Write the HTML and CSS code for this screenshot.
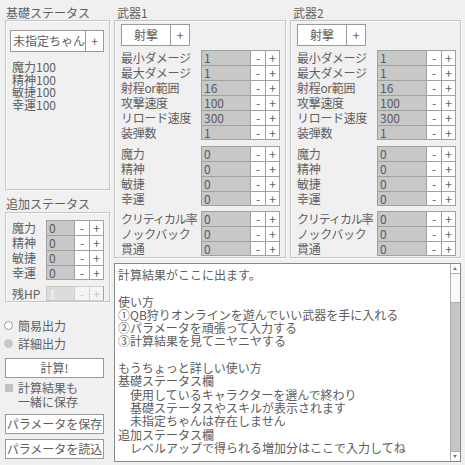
FILE: index.html
```html
<!DOCTYPE html>
<html lang="ja">
<head>
<meta charset="utf-8">
<link rel="stylesheet" href="styles.css">
</head>
<body>
<div class="app">
  <div class="left">
    <div class="title">基礎ステータス</div>
    <div class="box base">
      <div class="pick char"><span class="pick-main">未指定ちゃん</span><span class="pick-plus">+</span></div>
      <div class="stats">魔力100<br>精神100<br>敏捷100<br>幸運100</div>
    </div>
    <div class="title t2">追加ステータス</div>
    <div class="box extra">
      <div class="rows">
        <div class="row"><span class="lbl">魔力</span><span class="inp">0</span><span class="btn">-</span><span class="btn">+</span></div>
        <div class="row"><span class="lbl">精神</span><span class="inp">0</span><span class="btn">-</span><span class="btn">+</span></div>
        <div class="row"><span class="lbl">敏捷</span><span class="inp">0</span><span class="btn">-</span><span class="btn">+</span></div>
        <div class="row"><span class="lbl">幸運</span><span class="inp">0</span><span class="btn">-</span><span class="btn">+</span></div>
      </div>
      <div class="row hp disabled"><span class="lbl">残HP</span><span class="inp">1</span><span class="btn">-</span><span class="btn">+</span></div>
    </div>
    <div class="radio"><span class="dot"></span>簡易出力</div>
    <div class="radio"><span class="dot on"></span>詳細出力</div>
    <div class="button calc">計算!</div>
    <div class="check"><span class="cb"></span><span>計算結果も<br>一緒に保存</span></div>
    <div class="button">パラメータを保存</div>
    <div class="button">パラメータを読込</div>
  </div>

  <div class="weapon">
    <div class="title">武器1</div>
    <div class="box wbox">
      <div class="pick shot"><span class="pick-main">射撃</span><span class="pick-plus">+</span></div>
      <div class="rows">
        <div class="row"><span class="lbl">最小ダメージ</span><span class="inp">1</span><span class="btn">-</span><span class="btn">+</span></div>
        <div class="row"><span class="lbl">最大ダメージ</span><span class="inp">1</span><span class="btn">-</span><span class="btn">+</span></div>
        <div class="row"><span class="lbl">射程or範囲</span><span class="inp">16</span><span class="btn">-</span><span class="btn">+</span></div>
        <div class="row"><span class="lbl">攻撃速度</span><span class="inp">100</span><span class="btn">-</span><span class="btn">+</span></div>
        <div class="row"><span class="lbl">リロード速度</span><span class="inp">300</span><span class="btn">-</span><span class="btn">+</span></div>
        <div class="row"><span class="lbl">装弾数</span><span class="inp">1</span><span class="btn">-</span><span class="btn">+</span></div>
      </div>
      <div class="rows g2">
        <div class="row"><span class="lbl">魔力</span><span class="inp">0</span><span class="btn">-</span><span class="btn">+</span></div>
        <div class="row"><span class="lbl">精神</span><span class="inp">0</span><span class="btn">-</span><span class="btn">+</span></div>
        <div class="row"><span class="lbl">敏捷</span><span class="inp">0</span><span class="btn">-</span><span class="btn">+</span></div>
        <div class="row"><span class="lbl">幸運</span><span class="inp">0</span><span class="btn">-</span><span class="btn">+</span></div>
      </div>
      <div class="rows g3">
        <div class="row"><span class="lbl narrow">クリティカル率</span><span class="inp">0</span><span class="btn">-</span><span class="btn">+</span></div>
        <div class="row"><span class="lbl">ノックバック</span><span class="inp">0</span><span class="btn">-</span><span class="btn">+</span></div>
        <div class="row"><span class="lbl">貫通</span><span class="inp">0</span><span class="btn">-</span><span class="btn">+</span></div>
      </div>
    </div>
  </div>

  <div class="weapon w2">
    <div class="title">武器2</div>
    <div class="box wbox">
      <div class="pick shot"><span class="pick-main">射撃</span><span class="pick-plus">+</span></div>
      <div class="rows">
        <div class="row"><span class="lbl">最小ダメージ</span><span class="inp">1</span><span class="btn">-</span><span class="btn">+</span></div>
        <div class="row"><span class="lbl">最大ダメージ</span><span class="inp">1</span><span class="btn">-</span><span class="btn">+</span></div>
        <div class="row"><span class="lbl">射程or範囲</span><span class="inp">16</span><span class="btn">-</span><span class="btn">+</span></div>
        <div class="row"><span class="lbl">攻撃速度</span><span class="inp">100</span><span class="btn">-</span><span class="btn">+</span></div>
        <div class="row"><span class="lbl">リロード速度</span><span class="inp">300</span><span class="btn">-</span><span class="btn">+</span></div>
        <div class="row"><span class="lbl">装弾数</span><span class="inp">1</span><span class="btn">-</span><span class="btn">+</span></div>
      </div>
      <div class="rows g2">
        <div class="row"><span class="lbl">魔力</span><span class="inp">0</span><span class="btn">-</span><span class="btn">+</span></div>
        <div class="row"><span class="lbl">精神</span><span class="inp">0</span><span class="btn">-</span><span class="btn">+</span></div>
        <div class="row"><span class="lbl">敏捷</span><span class="inp">0</span><span class="btn">-</span><span class="btn">+</span></div>
        <div class="row"><span class="lbl">幸運</span><span class="inp">0</span><span class="btn">-</span><span class="btn">+</span></div>
      </div>
      <div class="rows g3">
        <div class="row"><span class="lbl narrow">クリティカル率</span><span class="inp">0</span><span class="btn">-</span><span class="btn">+</span></div>
        <div class="row"><span class="lbl">ノックバック</span><span class="inp">0</span><span class="btn">-</span><span class="btn">+</span></div>
        <div class="row"><span class="lbl">貫通</span><span class="inp">0</span><span class="btn">-</span><span class="btn">+</span></div>
      </div>
    </div>
  </div>

  <div class="output">
    <div class="text">計算結果がここに出ます。

使い方
①QB狩りオンラインを遊んでいい武器を手に入れる
②パラメータを頑張って入力する
③計算結果を見てニヤニヤする

もうちょっと詳しい使い方
基礎ステータス欄
　使用しているキャラクターを選んで終わり
　基礎ステータスやスキルが表示されます
　未指定ちゃんは存在しません
追加ステータス欄
　レベルアップで得られる増加分はここで入力してね</div>
    <div class="scroll">
      <span class="arrow up"></span>
      <span class="thumb"></span>
      <span class="track"></span>
      <span class="arrow down"></span>
    </div>
  </div>
</div>
</body>
</html>
```

FILE: styles.css
```css
html, body {
  margin: 0;
  padding: 0;
}
body {
  background: #f0f0f0;
  color: #606060;
  font-family: "Noto Sans CJK JP", "Noto Sans", sans-serif;
  font-size: 12px;
  line-height: 15px;
  width: 465px;
  height: 465px;
  overflow: hidden;
}
.app {
  display: grid;
  grid-template-columns: 113px 176px 176px;
  grid-template-rows: 260px 205px;
}
.left {
  grid-row: 1 / 3;
  display: flex;
  flex-direction: column;
}
.title {
  height: 20px;
  padding-left: 6px;
  line-height: 15px;
  padding-top: 5px;
  box-sizing: border-box;
}
.title.t2 {
  height: 22px;
  padding-top: 6px;
}
.box {
  border: 1px solid #c4c4c4;
  box-shadow: inset 1px 1px 0 #fafafa, 1px 1px 0 #fafafa;
  box-sizing: border-box;
}
.base {
  margin-left: 5px;
  width: 105px;
  height: 170px;
  padding: 9px 0 0 4px;
}
.pick {
  display: flex;
  height: 22px;
  background: #fff;
  border: 1px solid #9a9a9a;
  box-sizing: border-box;
  line-height: 20px;
}
.pick-main {
  flex: 1;
  text-align: center;
  border-right: 1px solid #9a9a9a;
}
.pick-plus {
  width: 17px;
  text-align: center;
}
.char {
  width: 94px;
}
.char .pick-main {
  padding-left: 2px;
  text-align: left;
}
.stats {
  margin-top: 9px;
  padding-left: 2px;
  line-height: 12.7px;
}
.rows {
  display: flex;
  flex-direction: column;
}
.row {
  display: flex;
  height: 15px;
  line-height: 15px;
}
.lbl {
  flex: none;
}
.inp {
  background: #c8c8c8;
  border: 1px solid #a0a0a0;
  border-right: none;
  border-bottom: none;
  padding-left: 2px;
  box-sizing: border-box;
  line-height: 14px;
  color: #5a5a5a;
}
.btn {
  width: 15px;
  background: #fff;
  border: 1px solid #a0a0a0;
  border-right: none;
  border-bottom: none;
  box-sizing: border-box;
  text-align: center;
  line-height: 14px;
}
.row .btn:last-child {
  border-right: 1px solid #a0a0a0;
}
.rows .row:last-child .inp,
.rows .row:last-child .btn,
.hp .inp,
.hp .btn {
  border-bottom: 1px solid #a0a0a0;
  height: 15px;
}
.extra {
  margin-left: 5px;
  width: 105px;
  height: 90px;
  padding: 7px 0 0 6px;
}
.extra .lbl {
  width: 34px;
}
.extra .inp {
  width: 28px;
}
.hp {
  margin-top: 6px;
}
.disabled .inp {
  background: #dcdcdc;
  border-color: #c8c8c8;
  color: #f4f4f4;
}
.disabled .btn {
  background: #f4f4f4;
  border-color: #d0d0d0;
  color: #c8c8c8;
}
.radio {
  display: flex;
  align-items: center;
  height: 18px;
  padding-left: 4px;
}
.left .extra + .radio {
  margin-top: 14px;
}
.dot {
  width: 7px;
  height: 7px;
  border: 1px solid #9a9a9a;
  border-radius: 50%;
  background: #fff;
  margin-right: 5px;
}
.dot.on {
  background: #c8c8c8;
  border-color: #c8c8c8;
}
.button {
  margin-left: 5px;
  width: 99px;
  height: 20px;
  background: #fff;
  border: 1px solid #9a9a9a;
  box-sizing: border-box;
  text-align: center;
  line-height: 18px;
}
.calc {
  margin-top: 6px;
}
.check {
  display: flex;
  margin-top: 3px;
  padding-left: 5px;
  line-height: 14px;
  height: 33px;
}
.cb {
  width: 8px;
  height: 8px;
  background: #c0c0c0;
  margin: 3px 5px 0 0;
}
.check + .button + .button {
  margin-top: 5px;
}
.weapon {
  display: flex;
  flex-direction: column;
}
.weapon .title {
  padding-left: 4px;
}
.wbox {
  margin-left: 1px;
  width: 172px;
  height: 238px;
  padding: 3px 0 0 6px;
}
.w2 .wbox {
  width: 171px;
}
.shot {
  width: 69px;
}
.shot .pick-plus {
  width: 18px;
}
.wbox .rows {
  margin-top: 4px;
}
.wbox .rows.g2 {
  margin-top: 6px;
}
.wbox .rows.g3 {
  margin-top: 5px;
}
.wbox .lbl {
  width: 80px;
  white-space: nowrap;
  letter-spacing: -0.3px;
}
.wbox .lbl.narrow {
  letter-spacing: -1.1px;
}
.wbox .inp {
  width: 49px;
}
.output {
  grid-column: 2 / 4;
  margin: 3px 0 0 1px;
  width: 347px;
  height: 199px;
  background: #fff;
  border: 1px solid #8a8a8a;
  box-sizing: border-box;
  display: flex;
}
.text {
  flex: 1;
  white-space: pre;
  overflow: hidden;
  padding: 4px 0 0 3px;
  line-height: 13.3px;
  color: #5c5c5c;
}
.scroll {
  width: 9px;
  border-left: 1px solid #b0b0b0;
  display: flex;
  flex-direction: column;
  background: #fff;
}
.arrow {
  height: 9px;
  background: #fff;
  position: relative;
  border-bottom: 1px solid #b0b0b0;
}
.arrow.down {
  border-bottom: none;
  border-top: 1px solid #b0b0b0;
}
.arrow::after {
  content: "";
  position: absolute;
  left: 2px;
  top: 3px;
  border-left: 2.5px solid transparent;
  border-right: 2.5px solid transparent;
  border-bottom: 3px solid #777;
}
.arrow.down::after {
  border-bottom: none;
  border-top: 3px solid #777;
}
.thumb {
  height: 28px;
  background: #fafafa;
  border-bottom: 1px solid #b0b0b0;
}
.track {
  flex: 1;
  background: #c6c6c6;
}
```
